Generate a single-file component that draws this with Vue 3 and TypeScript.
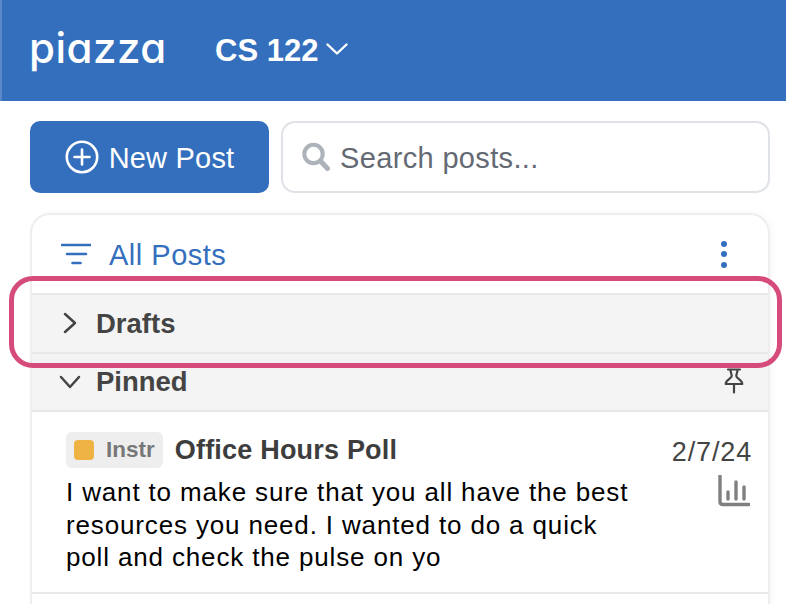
<template>
  <div class="page">
    <header class="topbar">
      <span class="logo">piazza</span>
      <span class="course">CS 122</span>
      <svg class="course-chevron" viewBox="0 0 22 12" width="22" height="12">
        <path d="M1.5 1.5 11 10.5 20.5 1.5" />
      </svg>
    </header>

    <main class="content">
      <div class="actions">
        <button class="new-post">
          <svg viewBox="0 0 34 34" width="34" height="34">
            <circle cx="17" cy="17" r="15.2" />
            <path d="M17 9.5v15M9.5 17h15" />
          </svg>
          <span>New Post</span>
        </button>
        <div class="search">
          <svg viewBox="0 0 28 30" width="28" height="30">
            <circle cx="11.5" cy="12" r="9.2" />
            <path class="handle" d="M18.5 19 25.5 26.5" />
          </svg>
          <span>Search posts...</span>
        </div>
      </div>

      <section class="card">
        <div class="filter-row">
          <svg class="filter-icon" viewBox="0 0 30 22" width="30" height="22">
            <path d="M1 2h29M6 11h19M11.5 20h8" />
          </svg>
          <span class="filter-label">All Posts</span>
          <span class="dots"><i></i><i></i><i></i></span>
        </div>

        <div class="group">
          <svg class="caret-right" viewBox="0 0 14 22" width="14" height="22">
            <path d="M2 2 12 11 2 20" />
          </svg>
          <span class="group-name">Drafts</span>
        </div>

        <div class="group">
          <svg class="caret-down" viewBox="0 0 22 14" width="22" height="14">
            <path d="M2 2 11 12 20 2" />
          </svg>
          <span class="group-name">Pinned</span>
          <svg class="pin" viewBox="0 0 20 26" width="20" height="26">
            <path d="M4 1.500h12M6.500 1.500c0 3 1.200 4.500 1.200 6.500 0 2.500-6 3.500-6 8h16.600c0-4.500-6-5.500-6-8 0-2 1.200-3.500 1.200-6.500M10 16v8.500" />
          </svg>
        </div>

        <article class="post">
          <div class="post-main">
            <div class="post-head">
              <span class="badge"><i></i>Instr</span>
              <span class="post-title">{{ post.title }}</span>
            </div>
            <p class="post-body">{{ post.body }}</p>
          </div>
          <div class="post-side">
            <span class="post-date">{{ post.date }}</span>
            <svg viewBox="0 0 32 32" width="32" height="32">
              <path d="M2 1v25.500q0 3 3 3h26" />
              <path d="M10 17v7M18 7v17M26 12v12" />
            </svg>
          </div>
        </article>
      </section>
    </main>

    <div class="highlight"></div>
  </div>
</template>

<script setup lang="ts">
const post = {
  title: 'Office Hours Poll',
  body: 'I want to make sure that you all have the best resources you need. I wanted to do a quick poll and check the pulse on yo',
  date: '2/7/24'
}
</script>

<style>
html,
body {
  margin: 0;
  background: #ffffff;
  overflow: hidden;
}
</style>

<style scoped>
.page {
  position: relative;
  width: 786px;
  height: 604px;
  overflow: hidden;
  font-family: "Liberation Sans", Arial, sans-serif;
}

.topbar {
  display: flex;
  align-items: center;
  height: 101px;
  padding-left: 27px;
  box-sizing: border-box;
  background: #346fbe;
  border-left: 2px solid #5a89c9;
  color: #ffffff;
}

.logo {
  width: 186px;
  font-family: Inter, "Noto Sans", sans-serif;
  font-feature-settings: "cv11" 1;
  font-size: 42px;
  font-weight: 500;
  letter-spacing: 0.5px;
  line-height: 1;
  margin-top: -6px;
}

.course {
  font-size: 31px;
  font-weight: 700;
}

.course-chevron {
  margin-left: 8px;
  margin-top: -3px;
  fill: none;
  stroke: #ffffff;
  stroke-width: 2.4;
  stroke-linecap: round;
  stroke-linejoin: round;
}

.content {
  padding: 20px 16px 0 30px;
}

.actions {
  display: flex;
  gap: 12px;
  height: 72px;
}

.new-post {
  display: flex;
  align-items: center;
  justify-content: center;
  gap: 10px;
  width: 239px;
  padding: 0;
  border: none;
  border-radius: 10px;
  background: #346fbe;
  color: #ffffff;
  font-family: inherit;
  font-size: 29px;
  letter-spacing: 0.2px;
}

.new-post span {
  margin-top: 3px;
}

.new-post svg {
  fill: none;
  stroke: #ffffff;
  stroke-width: 2.6;
  stroke-linecap: round;
}

.search {
  flex: 1;
  display: flex;
  align-items: center;
  gap: 10px;
  padding-left: 19px;
  border: 2px solid #dfe2e6;
  border-radius: 14px;
  color: #646a73;
  font-size: 29px;
  letter-spacing: 0.35px;
}

.search span {
  margin-top: 3px;
}

.search svg {
  fill: none;
  stroke: #adb3bb;
  stroke-width: 4;
  stroke-linecap: round;
}

.search .handle {
  stroke-width: 5;
}

.card {
  margin-top: 20px;
  height: 420px;
  border: 2px solid #eeeeee;
  border-bottom: none;
  border-radius: 20px 20px 0 0;
  box-shadow: 2px 0 6px rgba(0, 0, 0, 0.03);
}

.filter-row {
  display: flex;
  align-items: center;
  height: 78px;
  padding: 0 41px 0 29px;
  color: #346fbe;
}

.filter-icon {
  fill: none;
  stroke: #346fbe;
  stroke-width: 2.6;
  stroke-linecap: round;
}

.filter-label {
  flex: 1;
  margin-top: 3px;
  margin-left: 18px;
  font-size: 29px;
  letter-spacing: 0.5px;
}

.dots {
  display: flex;
  flex-direction: column;
  gap: 4.500px;
}

.dots i {
  width: 6px;
  height: 6px;
  border-radius: 50%;
  background: #346fbe;
}

.group {
  display: flex;
  align-items: center;
  height: 58.5px;
  box-sizing: border-box;
  padding: 0 24px 0 28px;
  border-top: 2px solid #e8e8e8;
  background: #f4f4f4;
  color: #444444;
}

.group-name {
  flex: 1;
  margin-top: 1px;
  font-size: 27.5px;
  font-weight: 700;
}

.caret-right {
  margin: 0 19px 0 3px;
  fill: none;
  stroke: #444444;
  stroke-width: 2.5;
  stroke-linecap: round;
  stroke-linejoin: round;
}

.caret-down {
  margin-right: 15px;
  margin-left: -1px;
  fill: none;
  stroke: #444444;
  stroke-width: 2.5;
  stroke-linecap: round;
  stroke-linejoin: round;
}

.pin {
  fill: none;
  stroke: #444444;
  stroke-width: 2.2;
  stroke-linecap: round;
  stroke-linejoin: round;
  margin-top: -2px;
}

.post {
  display: flex;
  height: 184px;
  box-sizing: border-box;
  padding: 20px 16px 0 34px;
  border-top: 2px solid #e8e8e8;
  border-bottom: 2px solid #e8e8e8;
}

.post-main {
  flex: 1;
}

.post-head {
  display: flex;
  align-items: center;
  gap: 12px;
}

.badge {
  display: flex;
  align-items: center;
  gap: 12px;
  height: 36px;
  padding: 0 8px;
  border-radius: 6px;
  background: #eeeeee;
  color: #777777;
  font-size: 22.5px;
  font-weight: 700;
}

.badge i {
  width: 20px;
  height: 20px;
  border-radius: 4px;
  background: #efb244;
}

.post-title {
  color: #3d3d3d;
  font-size: 27px;
  font-weight: 700;
  letter-spacing: 0.2px;
}

.post-body {
  width: 570px;
  margin: 8px 0 0;
  color: #000000;
  font-size: 26px;
  line-height: 32.5px;
  letter-spacing: 0.85px;
}

.post-side {
  display: flex;
  flex-direction: column;
  align-items: flex-end;
  gap: 7px;
  padding-top: 5px;
}

.post-date {
  color: #444444;
  font-size: 27px;
  letter-spacing: 0.85px;
}

.post-side svg {
  margin-right: 2px;
  fill: none;
  stroke: #808080;
  stroke-width: 3.4;
  stroke-linecap: round;
}

.highlight {
  position: absolute;
  left: 9px;
  top: 276px;
  width: 773px;
  height: 92px;
  box-sizing: border-box;
  border: 5px solid #d54c7c;
  border-radius: 24px;
}
</style>
